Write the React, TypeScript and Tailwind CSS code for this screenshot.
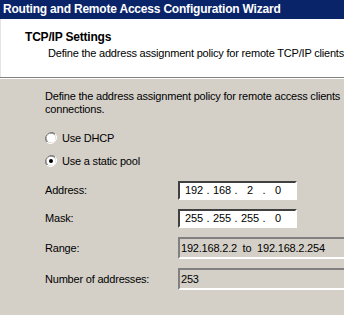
function Radio({ checked }: { checked?: boolean }) {
  return (
    <svg width="12" height="12" viewBox="0 0 12 12" className="shrink-0">
      <path d="M10.2 1.8 A6 6 0 0 0 1.8 10.2" fill="none" stroke="#808080" strokeWidth="1" />
      <path d="M9.5 2.5 A5 5 0 0 0 2.5 9.5" fill="none" stroke="#404040" strokeWidth="1" />
      <circle cx="6" cy="6" r="4.6" fill="#ffffff" />
      <path d="M1.8 10.2 A6 6 0 0 0 10.2 1.8" fill="none" stroke="#ffffff" strokeWidth="1" />
      {checked && <circle cx="6" cy="6" r="2" fill="#000000" />}
    </svg>
  );
}

function IpBox({ parts }: { parts: string[] }) {
  return (
    <div className="flex items-center h-[19px] w-[119px] bg-white border-2 border-t-[#404040] border-l-[#404040] border-b-[#ffffff] border-r-[#ffffff] pl-[3px]">
      {parts.map((p, i) => (
        <div key={i} className="flex">
          <span className="w-[22px] text-center">{p}</span>
          {i < 3 && <span className="w-[6px] text-center">.</span>}
        </div>
      ))}
    </div>
  );
}

function ReadOnly({ text }: { text: string }) {
  return (
    <div className="flex items-center h-[22px] w-[200px] border-2 border-t-[#808080] border-l-[#808080] border-b-[#ffffff] border-r-[#ffffff] pl-[1px] whitespace-pre">
      {text}
    </div>
  );
}

export default function App() {
  return (
    <div
      className="w-[344px] h-[315px] overflow-hidden bg-[#d4d0c8] text-black text-[11px] leading-[13px] tracking-[-0.2px]"
      style={{ fontFamily: '"Liberation Sans", Arial, sans-serif' }}
    >
      <div className="h-[19px] bg-[#0a246a] text-white font-bold text-[12px] leading-[19px] pl-[3px] whitespace-nowrap">
        Routing and Remote Access Configuration Wizard
      </div>
      <div className="h-[58px] bg-white border-l border-[#e4e4e4] pt-[11px] whitespace-nowrap">
        <div className="pl-[24px] font-bold text-[12px] leading-[14px]">TCP/IP Settings</div>
        <div className="pl-[47px] mt-[3px]">Define the address assignment policy for remote TCP/IP clients</div>
      </div>
      <div className="h-px bg-[#808080]" />
      <div className="h-px bg-white" />
      <div className="pl-[45px] pt-[11px]">
        <div className="whitespace-nowrap">Define the address assignment policy for remote access clients</div>
        <div>connections.</div>
        <div className="flex flex-col gap-[11px] mt-[16px]">
          <div className="flex items-center gap-[5px] h-[12px]">
            <Radio />
            <span>Use DHCP</span>
          </div>
          <div className="flex items-center gap-[5px] h-[12px]">
            <Radio checked />
            <span>Use a static pool</span>
          </div>
        </div>
        <div className="grid grid-cols-[133px_auto] items-center mt-[14px]">
          <span>Address:</span>
          <IpBox parts={['192', '168', '2', '0']} />
          <span className="mt-[9px]">Mask:</span>
          <div className="mt-[9px]">
            <IpBox parts={['255', '255', '255', '0']} />
          </div>
          <span className="mt-[9px]">Range:</span>
          <div className="mt-[9px]">
            <ReadOnly text="192.168.2.2  to  192.168.2.254" />
          </div>
          <span className="mt-[9px]">Number of addresses:</span>
          <div className="mt-[9px]">
            <ReadOnly text="253" />
          </div>
        </div>
      </div>
    </div>
  );
}
